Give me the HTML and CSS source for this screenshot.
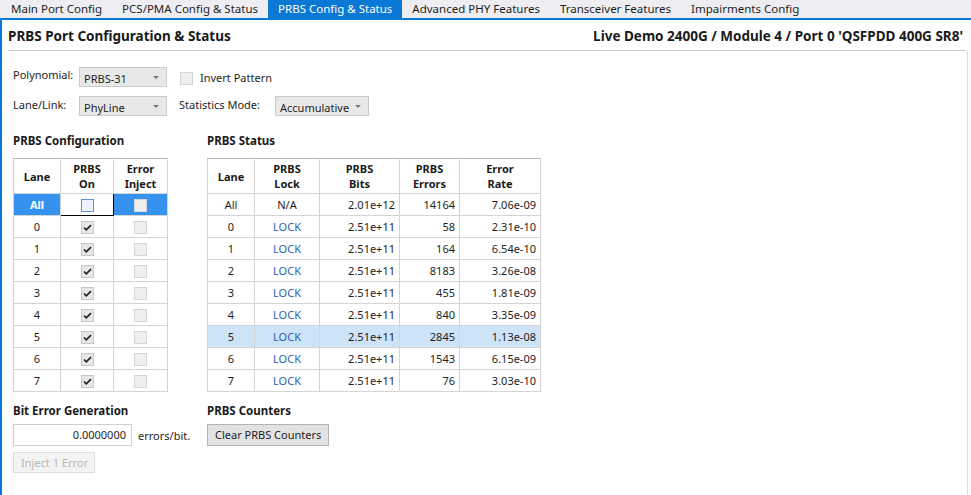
FILE: index.html
```html
<!DOCTYPE html>
<html>
<head>
<meta charset="utf-8">
<link rel="stylesheet" href="styles.css">
</head>
<body>
<div class="tabs">
  <div class="tab">Main Port Config</div>
  <div class="tab">PCS/PMA Config &amp; Status</div>
  <div class="tab active">PRBS Config &amp; Status</div>
  <div class="tab">Advanced PHY Features</div>
  <div class="tab">Transceiver Features</div>
  <div class="tab">Impairments Config</div>
</div>
<div class="pane">
  <div class="header">
    <span class="title">PRBS Port Configuration &amp; Status</span>
    <span class="title">Live Demo 2400G / Module 4 / Port 0 'QSFPDD 400G SR8'</span>
  </div>
  <div class="body">
    <div class="form">
      <div class="frow">
        <span class="lbl">Polynomial:</span>
        <div class="combo w88"><span>PRBS-31</span><span class="arrow"></span></div>
        <span class="chk plain"></span>
        <span class="chklbl">Invert Pattern</span>
      </div>
      <div class="frow">
        <span class="lbl">Lane/Link:</span>
        <div class="combo w88"><span>PhyLine</span><span class="arrow"></span></div>
        <span class="lbl2">Statistics Mode:</span>
        <div class="combo w94"><span>Accumulative</span><span class="arrow"></span></div>
      </div>
    </div>
    <div class="sections">
      <div class="col leftcol">
        <div class="sec-title">PRBS Configuration</div>
        <table class="grid cfg">
          <colgroup><col class="cw47"><col class="cw53"><col class="cw54"></colgroup>
          <thead><tr><th>Lane</th><th>PRBS<br>On</th><th>Error<br>Inject</th></tr></thead>
          <tbody>
            <tr class="sel"><td class="selcell">All</td><td class="focus"><span class="chk focusbox"></span></td><td class="selcell"><span class="chk dis"></span></td></tr>
            <tr><td>0</td><td><span class="chk on"><svg viewBox="0 0 13 13"><polyline points="3,6.5 5.3,8.8 10,4.2"/></svg></span></td><td><span class="chk dis"></span></td></tr>
            <tr><td>1</td><td><span class="chk on"><svg viewBox="0 0 13 13"><polyline points="3,6.5 5.3,8.8 10,4.2"/></svg></span></td><td><span class="chk dis"></span></td></tr>
            <tr><td>2</td><td><span class="chk on"><svg viewBox="0 0 13 13"><polyline points="3,6.5 5.3,8.8 10,4.2"/></svg></span></td><td><span class="chk dis"></span></td></tr>
            <tr><td>3</td><td><span class="chk on"><svg viewBox="0 0 13 13"><polyline points="3,6.5 5.3,8.8 10,4.2"/></svg></span></td><td><span class="chk dis"></span></td></tr>
            <tr><td>4</td><td><span class="chk on"><svg viewBox="0 0 13 13"><polyline points="3,6.5 5.3,8.8 10,4.2"/></svg></span></td><td><span class="chk dis"></span></td></tr>
            <tr><td>5</td><td><span class="chk on"><svg viewBox="0 0 13 13"><polyline points="3,6.5 5.3,8.8 10,4.2"/></svg></span></td><td><span class="chk dis"></span></td></tr>
            <tr><td>6</td><td><span class="chk on"><svg viewBox="0 0 13 13"><polyline points="3,6.5 5.3,8.8 10,4.2"/></svg></span></td><td><span class="chk dis"></span></td></tr>
            <tr><td>7</td><td><span class="chk on"><svg viewBox="0 0 13 13"><polyline points="3,6.5 5.3,8.8 10,4.2"/></svg></span></td><td><span class="chk dis"></span></td></tr>
          </tbody>
        </table>
        <div class="sec-title lower">Bit Error Generation</div>
        <div class="inrow">
          <div class="textbox">0.0000000</div>
          <span class="unit">errors/bit.</span>
        </div>
        <div class="btn disabled">Inject 1 Error</div>
      </div>
      <div class="col rightcol">
        <div class="sec-title">PRBS Status</div>
        <table class="grid status">
          <colgroup><col class="cw47"><col class="cw65"><col class="cw80"><col class="cw60"><col class="cw81"></colgroup>
          <thead><tr><th>Lane</th><th>PRBS<br>Lock</th><th>PRBS<br>Bits</th><th>PRBS<br>Errors</th><th>Error<br>Rate</th></tr></thead>
          <tbody>
            <tr><td class="c">All</td><td class="c">N/A</td><td class="r">2.01e+12</td><td class="r">14164</td><td class="r">7.06e-09</td></tr>
            <tr><td class="c">0</td><td class="c lock">LOCK</td><td class="r">2.51e+11</td><td class="r">58</td><td class="r">2.31e-10</td></tr>
            <tr><td class="c">1</td><td class="c lock">LOCK</td><td class="r">2.51e+11</td><td class="r">164</td><td class="r">6.54e-10</td></tr>
            <tr><td class="c">2</td><td class="c lock">LOCK</td><td class="r">2.51e+11</td><td class="r">8183</td><td class="r">3.26e-08</td></tr>
            <tr><td class="c">3</td><td class="c lock">LOCK</td><td class="r">2.51e+11</td><td class="r">455</td><td class="r">1.81e-09</td></tr>
            <tr><td class="c">4</td><td class="c lock">LOCK</td><td class="r">2.51e+11</td><td class="r">840</td><td class="r">3.35e-09</td></tr>
            <tr class="hl"><td class="c">5</td><td class="c lock">LOCK</td><td class="r">2.51e+11</td><td class="r">2845</td><td class="r">1.13e-08</td></tr>
            <tr><td class="c">6</td><td class="c lock">LOCK</td><td class="r">2.51e+11</td><td class="r">1543</td><td class="r">6.15e-09</td></tr>
            <tr><td class="c">7</td><td class="c lock">LOCK</td><td class="r">2.51e+11</td><td class="r">76</td><td class="r">3.03e-10</td></tr>
          </tbody>
        </table>
        <div class="sec-title lower">PRBS Counters</div>
        <div class="inrow">
          <div class="btn">Clear PRBS Counters</div>
        </div>
      </div>
    </div>
  </div>
</div>
</body>
</html>
```
FILE: styles.css
```css
* { box-sizing: border-box; }
html, body { margin: 0; padding: 0; }
body {
  width: 971px;
  height: 495px;
  overflow: hidden;
  background: #ffffff;
  font-family: "Noto Sans", "Open Sans", sans-serif;
  font-size: 11px;
  color: #1e1e1e;
}
.tabs {
  display: flex;
  height: 18px;
  background: #eeeef2;
  padding-left: 1px;
}
.tab {
  height: 18px;
  line-height: 18px;
  padding: 0 10px;
  font-size: 11.5px;
  color: #1e1e1e;
  white-space: nowrap;
}
.tab.active {
  background: #0a78d4;
  color: #ffffff;
}
.pane {
  border-top: 2px solid #0a78d4;
  border-left: 2px solid #0a78d4;
  height: 477px;
  display: flex;
  flex-direction: column;
}
.header {
  display: flex;
  justify-content: space-between;
  align-items: center;
  height: 31px;
  margin: 0 6px 0 6px;
  padding: 2px 2px 0 0;
  border-bottom: 1px solid #c8c8c8;
  width: 957px;
}
.title {
  font-weight: bold;
  font-size: 13.5px;
  color: #1a1a1a;
  white-space: nowrap;
}
.body {
  flex: 1;
  padding: 0 0 0 11px;
  border-right: 1px solid #dcdcdc;
  margin-right: 3px;
}
.form {
  padding-top: 16px;
  display: flex;
  flex-direction: column;
  gap: 9px;
}
.frow {
  display: flex;
  align-items: center;
  height: 20px;
}
.lbl {
  width: 66px;
  margin-top: -6px;
}
.frow:nth-child(2) .lbl { margin-top: -4px; }
.lbl2 {
  margin-left: 12px;
  width: 96px;
  margin-top: -4px;
}
.combo {
  height: 20px;
  border: 1px solid #cbcbcb;
  background: #e8e8e8;
  display: flex;
  align-items: center;
  justify-content: space-between;
  padding: 2px 7px 0 4px;
}
.w88 { width: 88px; }
.w94 { width: 94px; }
.arrow {
  width: 0;
  height: 0;
  border-left: 3px solid transparent;
  border-right: 3px solid transparent;
  border-top: 3px solid #777;
  margin-top: -2px;
}
.chk {
  display: inline-flex;
  width: 13px;
  height: 13px;
  border: 1px solid #c6c6c6;
  background: #ececec;
  align-items: center;
  justify-content: center;
  vertical-align: middle;
}
.chk svg { width: 13px; height: 13px; flex: none; }
.chk svg polyline {
  fill: none;
  stroke: #222;
  stroke-width: 1.7;
}
.chk.plain {
  margin-left: 13px;
  margin-top: 2px;
  background: #efefef;
  border-color: #d4d4d4;
}
.chklbl { margin-left: 7px; }
.chk.dis {
  background: #efefef;
  border-color: #d6d6d6;
}
.chk.focusbox {
  background: #eef3fb;
  border-color: #5b95d9;
}
.chk.on {
  background: #e7e7e7;
  border-color: #c8c8c8;
}
.sections {
  display: flex;
  margin-top: 17px;
}
.col {
  display: flex;
  flex-direction: column;
  align-items: flex-start;
}
.leftcol { width: 194px; }
.sec-title {
  font-weight: bold;
  font-size: 11.5px;
  height: 16px;
  line-height: 16px;
  margin-bottom: 9px;
  color: #1a1a1a;
}
.sec-title.lower {
  margin-top: 11px;
  margin-bottom: 5px;
}
.grid {
  border-collapse: collapse;
  table-layout: fixed;
  border: 1px solid #b9b9b9;
}
.cfg { width: 154px; }
.status { width: 333px; }
.cw47 { width: 47px; }
.cw53 { width: 53px; }
.cw54 { width: 54px; }
.cw65 { width: 65px; }
.cw80 { width: 80px; }
.cw60 { width: 60px; }
.cw81 { width: 81px; }
.grid th {
  height: 35px;
  font-weight: bold;
  line-height: 15px;
  border: 1px solid #d4d4d4;
  border-top-color: #b9b9b9;
  background: #ffffff;
  text-align: center;
  padding: 0;
  color: #1a1a1a;
}
.grid td {
  height: 22px;
  border: 1px solid #d4d4d4;
  padding: 0 4px;
  text-align: center;
  white-space: nowrap;
}
.grid.cfg td { padding: 0; }
.grid td.c { text-align: center; }
.grid td.r { text-align: right; }
.grid td.lock { color: #2c5fb3; }
.grid tr.hl td { background: #cde3f7; }
.grid td.selcell {
  background: #3592ee;
  color: #ffffff;
  font-weight: bold;
}
.grid td.focus {
  border: 1px solid #000000;
  background: #ffffff;
}
.inrow {
  display: flex;
  align-items: center;
}
.textbox {
  width: 119px;
  height: 22px;
  border: 1px solid #cfcfcf;
  background: #fff;
  text-align: right;
  line-height: 20px;
  padding-right: 5px;
}
.unit { margin-left: 6px; }
.btn {
  height: 22px;
  border: 1px solid #b3b3b3;
  background: #e2e2e2;
  padding: 0 7px;
  line-height: 20px;
  white-space: nowrap;
  display: inline-block;
}
.btn.disabled {
  margin-top: 6px;
  width: 82px;
  height: 21px;
  color: #b7b7b7;
  background: #f3f3f3;
  border-color: #dedede;
}
```
